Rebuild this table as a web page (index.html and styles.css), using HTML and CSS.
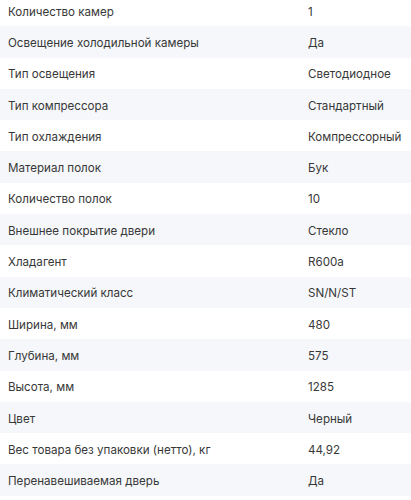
FILE: index.html
```html
<!DOCTYPE html>
<html lang="ru">
<head>
<meta charset="utf-8">
<link rel="stylesheet" href="styles.css">
</head>
<body>
<div class="specs">
  <div class="row"><span class="label">Количество камер</span><span class="value">1</span></div>
  <div class="row alt"><span class="label">Освещение холодильной камеры</span><span class="value">Да</span></div>
  <div class="row"><span class="label">Тип освещения</span><span class="value">Светодиодное</span></div>
  <div class="row alt"><span class="label">Тип компрессора</span><span class="value">Стандартный</span></div>
  <div class="row"><span class="label">Тип охлаждения</span><span class="value">Компрессорный</span></div>
  <div class="row alt"><span class="label">Материал полок</span><span class="value">Бук</span></div>
  <div class="row"><span class="label">Количество полок</span><span class="value">10</span></div>
  <div class="row alt"><span class="label">Внешнее покрытие двери</span><span class="value">Стекло</span></div>
  <div class="row"><span class="label">Хладагент</span><span class="value">R600a</span></div>
  <div class="row alt"><span class="label">Климатический класс</span><span class="value">SN/N/ST</span></div>
  <div class="row"><span class="label">Ширина, мм</span><span class="value">480</span></div>
  <div class="row alt"><span class="label">Глубина, мм</span><span class="value">575</span></div>
  <div class="row"><span class="label">Высота, мм</span><span class="value">1285</span></div>
  <div class="row alt"><span class="label">Цвет</span><span class="value">Черный</span></div>
  <div class="row"><span class="label">Вес товара без упаковки (нетто), кг</span><span class="value">44,92</span></div>
  <div class="row alt"><span class="label">Перенавешиваемая дверь</span><span class="value">Да</span></div>
</div>
</body>
</html>
```
FILE: styles.css
```css
html, body {
  margin: 0;
  padding: 0;
  background: #ffffff;
}
body {
  font-family: Inter, "Noto Sans", sans-serif;
  font-size: 11.6px;
  color: #383838;
}
.specs {
  margin-top: -5px;
  display: flex;
  flex-direction: column;
}
.row {
  display: grid;
  grid-template-columns: 308px 1fr;
  align-items: center;
  box-sizing: border-box;
  height: 31.3px;
  padding-top: 2px;
}
.row.alt {
  background: #f5f7fa;
}
.label {
  padding-left: 8px;
}
```
